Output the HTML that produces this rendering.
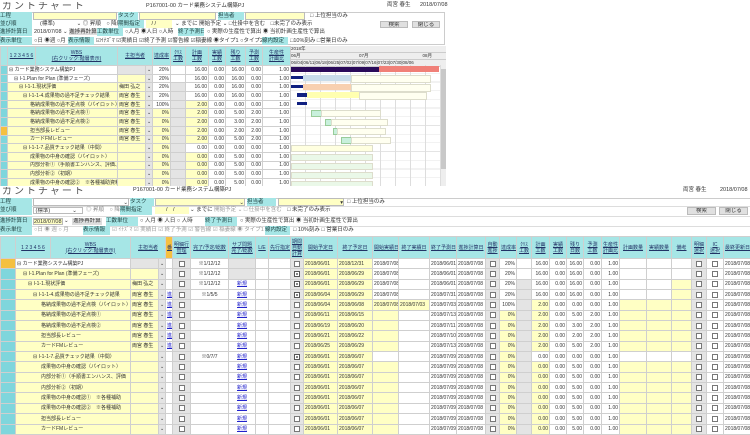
<!DOCTYPE html>
<html><head><meta charset="utf-8">
<style>
body{margin:0;width:750px;height:434px;overflow:hidden;background:#fff;font-family:"Liberation Sans","Noto Sans CJK JP",sans-serif;font-size:5.5px;color:#333;position:relative}
.a{position:absolute;white-space:nowrap;overflow:hidden;line-height:8px}
.l{background:#a6e6e6;color:#244}
.yy{background:#ffffc4}
.in{border:1px solid #bbb;box-sizing:border-box}
table{border-collapse:collapse;table-layout:fixed;position:absolute}
td{border:1px solid #cfcfcf;padding:0 1px;white-space:nowrap;overflow:hidden;font-size:5px;line-height:6px}
td.h{background:#a6e6e6;color:#236;text-align:center;text-decoration:underline}
td.y{background:#ffffc4}
td.g{background:#e4e4e4}
td.c{background:#7fd6dc}
td.o{background:#f5c040}
td.r{text-align:right}
td.m{text-align:center}
i.c{display:inline-block;width:4px;height:4px;border:1px solid #777;background:#fff;vertical-align:middle;font-style:normal}
i.k{background:#fff;border-color:#555;box-shadow:inset 0 0 0 1px #fff,inset 0 0 0 3px #888}
a{color:#22c;text-decoration:underline}
.t{font-size:10px;color:#555;letter-spacing:2px;line-height:10px}
.btn{background:#e0e0e0;border:1px solid #bbb;box-sizing:border-box;text-align:center}
</style></head><body>

<!-- ===== TOP PANEL ===== -->
<div class="a t" style="left:2px;top:2px">ガントチャート</div>
<div class="a" style="left:146px;top:2px">P167001-00 カード業務システム構築PJ</div>
<div class="a" style="left:387px;top:1px">両宮 春生</div>
<div class="a" style="left:420px;top:1px">2018/07/08</div>
<div class="a" style="left:0;top:12px;width:445px;height:33px;border:1px solid #ccc;box-sizing:border-box"></div>
<div class="a l" style="left:0;top:12px;width:32px;height:8px">工程</div>
<div class="a yy in" style="left:33px;top:12px;width:84px;height:8px"></div>
<div class="a l" style="left:118px;top:12px;width:20px;height:8px">タスク</div>
<div class="a yy in" style="left:139px;top:12px;width:77px;height:8px"></div>
<div class="a l" style="left:218px;top:12px;width:26px;height:8px">担当者</div>
<div class="a yy in" style="left:245px;top:12px;width:60px;height:8px"></div>
<div class="a" style="left:310px;top:12px">□ 上位担当のみ</div>
<div class="a l" style="left:0;top:20px;width:32px;height:8px">並び順</div>
<div class="a" style="left:40px;top:20px">(標準)　　　　⌄ ◎ 昇順　○ 降順</div>
<div class="a l" style="left:118px;top:20px;width:26px;height:8px">期間指定</div>
<div class="a yy" style="left:146px;top:20px;width:26px;height:8px">　/ /</div>
<div class="a" style="left:175px;top:20px">⌄ までに 開始予定 ⌄ □仕掛中を含む　□未完了のみ表示</div>
<div class="a btn" style="left:380px;top:21px;width:28px;height:7px;line-height:6px">検索</div>
<div class="a btn" style="left:412px;top:21px;width:28px;height:7px;line-height:6px">閉じる</div>
<div class="a l" style="left:0;top:28px;width:32px;height:8px">進捗計算日</div>
<div class="a" style="left:34px;top:28px">2018/07/08 ⌄ <span style="background:#ddd">進捗再計算</span></div>
<div class="a l" style="left:97px;top:28px;width:26px;height:8px">工数単位</div>
<div class="a" style="left:125px;top:28px">○人月 ◉人日 ○人時</div>
<div class="a l" style="left:178px;top:28px;width:26px;height:8px">終了予測日</div>
<div class="a" style="left:207px;top:28px">○ 実際の生産性で算出 ◉ 当初計画生産性で算出</div>
<div class="a l" style="left:0;top:37px;width:32px;height:8px">表示単位</div>
<div class="a" style="left:34px;top:37px">○日 ◉週 ○月</div>
<div class="a l" style="left:68px;top:37px;width:26px;height:8px">表示情報</div>
<div class="a" style="left:96px;top:37px">☑ｲﾅｽﾞﾏ ☑実績日 ☑終了予測 ☑警告線 ☑稲妻線 ◉タイプ1 ○タイプ2</div>
<div class="a l" style="left:262px;top:37px;width:26px;height:8px">線内設定</div>
<div class="a" style="left:290px;top:37px">□10%刻み □営業日のみ</div>

<table style="left:0;top:46px;width:290px">
<colgroup><col style="width:7px"><col style="width:28px"><col style="width:82px"><col style="width:28px"><col style="width:7px"><col style="width:18px"><col style="width:15px"><col style="width:23px"><col style="width:17px"><col style="width:20px"><col style="width:17px"><col style="width:28px"></colgroup>
<tr style="height:19px"><td class="h"></td><td class="h">1 2 3 4 5 6</td><td class="h">WBS<br>(右クリック:階層表示)</td><td class="h" colspan="2">主担当者</td><td class="h">達成率</td><td class="h">ｸﾘｽ<br>工数</td><td class="h">計画<br>工数</td><td class="h">実績<br>工数</td><td class="h">残り<br>工数</td><td class="h">予測<br>工数</td><td class="h">生産性<br>計画比</td></tr>
<tr style="height:8.7px"><td class="c"></td><td colspan="2">⊟ カード業務システム構築PJ</td><td class="g"></td><td class="g">⌄</td><td class="r">20%</td><td></td><td class="r">16.00</td><td class="r">0.00</td><td class="r">16.00</td><td class="r">0.00</td><td class="r">1.00</td></tr>
<tr style="height:8.7px"><td class="c"></td><td colspan="2" style="padding-left:6px">⊟ I-1.Plan for Plan (準備フェーズ)</td><td class="y"></td><td class="g">⌄</td><td class="r">20%</td><td></td><td class="r">16.00</td><td class="r">0.00</td><td class="r">16.00</td><td class="r">0.00</td><td class="r">1.00</td></tr>
<tr style="height:8.7px"><td class="c"></td><td colspan="2" class="y" style="padding-left:11px">⊟ I-1-1.現状評価</td><td class="y">梅田 弘之</td><td class="g">⌄</td><td class="r">20%</td><td class="g"></td><td class="r">16.00</td><td class="r">0.00</td><td class="r">16.00</td><td class="r">0.00</td><td class="r">1.00</td></tr>
<tr style="height:8.7px"><td class="c"></td><td colspan="2" class="y" style="padding-left:15px">⊟ I-1-1-4.成果物の過不足チェック結果</td><td class="y">両宮 春生</td><td class="g">⌄</td><td class="r">20%</td><td class="g"></td><td class="r">16.00</td><td class="r">0.00</td><td class="r">16.00</td><td class="r">0.00</td><td class="r">1.00</td></tr>
<tr style="height:8.7px"><td class="c"></td><td colspan="2" class="y" style="padding-left:22px">格納成果物の過不足点検（パイロット）</td><td class="y">両宮 春生</td><td class="g">⌄</td><td class="r">100%</td><td class="g"></td><td class="r y">2.00</td><td class="r">0.00</td><td class="r">0.00</td><td class="r">0.00</td><td class="r">1.00</td></tr>
<tr style="height:8.7px"><td class="c"></td><td colspan="2" class="y" style="padding-left:22px">格納成果物の過不足点検①</td><td class="y">両宮 春生</td><td class="g">⌄</td><td class="r y">0%</td><td class="g"></td><td class="r y">2.00</td><td class="r">0.00</td><td class="r">5.00</td><td class="r">2.00</td><td class="r">1.00</td></tr>
<tr style="height:8.7px"><td class="c"></td><td colspan="2" class="y" style="padding-left:22px">格納成果物の過不足点検②</td><td class="y">両宮 春生</td><td class="g">⌄</td><td class="r y">0%</td><td class="g"></td><td class="r y">2.00</td><td class="r">0.00</td><td class="r">3.00</td><td class="r">2.00</td><td class="r">1.00</td></tr>
<tr style="height:8.7px"><td class="o"></td><td colspan="2" class="y" style="padding-left:22px">担当部長レビュー</td><td class="y">両宮 春生</td><td class="g">⌄</td><td class="r y">0%</td><td class="g"></td><td class="r y">2.00</td><td class="r">0.00</td><td class="r">2.00</td><td class="r">2.00</td><td class="r">1.00</td></tr>
<tr style="height:8.7px"><td class="c"></td><td colspan="2" class="y" style="padding-left:22px">カードFMレビュー</td><td class="y">両宮 春生</td><td class="g">⌄</td><td class="r y">0%</td><td class="g"></td><td class="r y">2.00</td><td class="r">0.00</td><td class="r">5.00</td><td class="r">2.00</td><td class="r">1.00</td></tr>
<tr style="height:8.7px"><td class="c"></td><td colspan="2" class="y" style="padding-left:15px">⊟ I-1-1-7.品質チェック結果（中間）</td><td class="y"></td><td class="g">⌄</td><td class="r y">0%</td><td class="g"></td><td class="r">0.00</td><td class="r">0.00</td><td class="r">0.00</td><td class="r">0.00</td><td class="r">1.00</td></tr>
<tr style="height:8.7px"><td class="c"></td><td colspan="2" class="y" style="padding-left:22px">成果物の中身の確認（パイロット）</td><td class="y"></td><td class="g">⌄</td><td class="r y">0%</td><td class="g"></td><td class="r y">0.00</td><td class="r">0.00</td><td class="r">5.00</td><td class="r">0.00</td><td class="r">1.00</td></tr>
<tr style="height:8.7px"><td class="c"></td><td colspan="2" class="y" style="padding-left:22px">内部分析①（手順書エンハンス、評価、I</td><td class="y"></td><td class="g">⌄</td><td class="r y">0%</td><td class="g"></td><td class="r y">0.00</td><td class="r">0.00</td><td class="r">5.00</td><td class="r">0.00</td><td class="r">1.00</td></tr>
<tr style="height:8.7px"><td class="c"></td><td colspan="2" class="y" style="padding-left:22px">内部分析②（初期）</td><td class="y"></td><td class="g">⌄</td><td class="r y">0%</td><td class="g"></td><td class="r y">0.00</td><td class="r">0.00</td><td class="r">5.00</td><td class="r">0.00</td><td class="r">1.00</td></tr>
<tr style="height:8.7px"><td class="c"></td><td colspan="2" class="y" style="padding-left:22px">成果物の中身の確認②　※各種補助資料</td><td class="y"></td><td class="g">⌄</td><td class="r y">0%</td><td class="g"></td><td class="r y">0.00</td><td class="r">0.00</td><td class="r">5.00</td><td class="r">0.00</td><td class="r">1.00</td></tr>
</table>

<!-- gantt -->
<div class="a" style="left:290px;top:46px;width:155px;height:140px;border-left:1px solid #ccc;background:#fff;font-size:4.5px;line-height:6px">
 <div style="height:6px;background:#eee;border-bottom:1px solid #ccc">2018年</div>
 <div style="height:6px;background:#eee;border-bottom:1px solid #ccc">06月　　　　　　　　　　　　　07月　　　　　　　　　　　　08月</div>
 <div style="height:6px;background:#eee;border-bottom:1px solid #ccc">06/04|06/11|06/18|06/25|07/02|07/09|07/16|07/23|07/30|08/06</div>
 <div style="position:absolute;left:0;top:19px;width:150px;height:121px;background:repeating-linear-gradient(90deg,transparent 0 14px,#ddd 14px 15px),repeating-linear-gradient(0deg,transparent 0 8px,#e4e4e4 8px 8.7px)"></div>
 <div style="position:absolute;left:0;top:21px;width:88px;height:5px;background:#2a0a5a"></div>
 <div style="position:absolute;left:88px;top:20px;width:60px;height:6px;background:#f08078"></div>
 <div style="position:absolute;left:0;top:30px;width:12px;height:3px;background:#102080"></div>
 <div style="position:absolute;left:12px;top:29px;width:48px;height:6px;background:#c8dcea"></div>
 <div style="position:absolute;left:60px;top:29px;width:78px;height:6px;border:1px solid #ddc;background:#fffff0"></div>
 <div style="position:absolute;left:0;top:39px;width:12px;height:3px;background:#102080"></div>
 <div style="position:absolute;left:12px;top:38px;width:48px;height:6px;background:#f8d0b0"></div>
 <div style="position:absolute;left:60px;top:38px;width:78px;height:6px;border:1px solid #ddc;background:#fffff0"></div>
 <div style="position:absolute;left:6px;top:47px;width:10px;height:4px;background:#102080"></div>
 <div style="position:absolute;left:16px;top:46px;width:52px;height:6px;background:#ffffb0"></div>
 <div style="position:absolute;left:68px;top:46px;width:66px;height:6px;border:1px solid #ddc;background:#fffff0"></div>
 <div style="position:absolute;left:6px;top:56px;width:10px;height:3px;background:#102080"></div>
 <div style="position:absolute;left:20px;top:64px;width:10px;height:5px;background:#c8f0dc;border:1px solid #9c9"></div>
 <div style="position:absolute;left:30px;top:64px;width:58px;height:5px;border:1px solid #ddc;background:#fffff0"></div>
 <div style="position:absolute;left:34px;top:73px;width:6px;height:5px;background:#c8f0dc;border:1px solid #9c9"></div>
 <div style="position:absolute;left:40px;top:73px;width:55px;height:5px;border:1px solid #ddc;background:#fffff0"></div>
 <div style="position:absolute;left:42px;top:82px;width:4px;height:5px;background:#c8f0dc;border:1px solid #9c9"></div>
 <div style="position:absolute;left:46px;top:82px;width:47px;height:5px;border:1px solid #ddc;background:#fffff0"></div>
 <div style="position:absolute;left:50px;top:91px;width:10px;height:5px;background:#c8f0dc;border:1px solid #9c9"></div>
 <div style="position:absolute;left:60px;top:91px;width:38px;height:5px;border:1px solid #ddc;background:#fffff0"></div>
 <div style="position:absolute;left:0;top:99px;width:80px;height:5px;border:1px solid #ddc;background:#ffffe0"></div>
 <div style="position:absolute;left:0;top:108px;width:80px;height:5px;border:1px solid #ddc;background:#eaf8e8"></div>
 <div style="position:absolute;left:0;top:117px;width:80px;height:5px;border:1px solid #ddc;background:#eaf8e8"></div>
 <div style="position:absolute;left:0;top:126px;width:80px;height:5px;border:1px solid #ddc;background:#eaf8e8"></div>
 <div style="position:absolute;left:0;top:135px;width:80px;height:5px;border:1px solid #ddc;background:#eaf8e8"></div>
 <div style="position:absolute;left:150px;top:19px;width:5px;height:121px;background:#eee"><div style="margin-top:4px;height:100px;background:#c8c8c8"></div></div>
</div>

<!-- ===== BOTTOM PANEL ===== -->
<div class="a" style="left:0;top:186px;width:750px;height:248px;background:#fff"></div>
<div class="a t" style="left:2px;top:187px">ガントチャート</div>
<div class="a" style="left:133px;top:186px">P167001-00 カード業務システム構築PJ</div>
<div class="a" style="left:683px;top:186px">両宮 春生</div>
<div class="a" style="left:720px;top:186px">2018/07/08</div>
<div class="a" style="left:0;top:198px;width:750px;height:37px;border-top:1px solid #ccc"></div>
<div class="a" style="left:0;top:206px;width:750px;border-top:1px solid #ddd"></div>
<div class="a" style="left:0;top:216px;width:750px;border-top:1px solid #ddd"></div>
<div class="a" style="left:0;top:226px;width:750px;border-top:1px solid #ddd"></div>
<div class="a l" style="left:0;top:198px;width:32px;height:8px">工程</div>
<div class="a in" style="left:33px;top:198px;width:96px;height:8px;text-align:right">⌄</div>
<div class="a l" style="left:130px;top:198px;width:24px;height:8px">タスク</div>
<div class="a yy in" style="left:155px;top:198px;width:90px;height:8px;text-align:right">⌄</div>
<div class="a l" style="left:247px;top:198px;width:29px;height:8px">担当者</div>
<div class="a yy in" style="left:278px;top:198px;width:66px;height:8px;text-align:right">▾</div>
<div class="a" style="left:347px;top:198px">□ 上位担当のみ</div>
<div class="a l" style="left:0;top:206px;width:32px;height:9px">並び順</div>
<div class="a in" style="left:33px;top:207px;width:50px;height:7px;line-height:6px">&nbsp;(標準)　　　　⌄</div>
<div class="a" style="left:86px;top:206px;color:#888">◎ 昇順　○ 降順</div>
<div class="a l" style="left:120px;top:206px;width:32px;height:9px">期間指定</div>
<div class="a yy" style="left:155px;top:207px;width:34px;height:7px;line-height:6px">　　/　/</div>
<div class="a" style="left:190px;top:206px">⌄ までに <span style="color:#999">開始予定 ⌄</span> <span style="color:#999">□ 仕掛中を含む</span>　□ 未完了のみ表示</div>
<div class="a btn" style="left:687px;top:207px;width:29px;height:8px;line-height:7px">検索</div>
<div class="a btn" style="left:719px;top:207px;width:29px;height:8px;line-height:7px">閉じる</div>
<div class="a l" style="left:0;top:217px;width:32px;height:9px">進捗計算日</div>
<div class="a yy in" style="left:33px;top:218px;width:30px;height:7px;line-height:6px">2018/07/08</div>
<div class="a" style="left:64px;top:217px">⌄</div>
<div class="a" style="left:72px;top:218px;width:30px;height:7px;line-height:6px;background:#ddd;text-align:center">進捗再計算</div>
<div class="a l" style="left:106px;top:217px;width:32px;height:9px">工数単位</div>
<div class="a" style="left:140px;top:217px">○ 人月 ◉ 人日 ○ 人時</div>
<div class="a l" style="left:205px;top:217px;width:32px;height:9px">終了予測日</div>
<div class="a" style="left:240px;top:217px">○ 実際の生産性で算出 ◉ 当初計画生産性で算出</div>
<div class="a l" style="left:0;top:226px;width:32px;height:9px">表示単位</div>
<div class="a" style="left:34px;top:226px;color:#999">○日 ◉ 週 ○ 月</div>
<div class="a l" style="left:83px;top:226px;width:27px;height:9px">表示情報</div>
<div class="a" style="left:112px;top:226px;color:#999">☑ ｲﾅｽﾞﾏ ☑ 実績日 ☑ 終了予測 ☑ 警告線 ☑ 稲妻線 ◉ タイプ1 ○ タイプ2</div>
<div class="a l" style="left:265px;top:226px;width:25px;height:9px">線内設定</div>
<div class="a" style="left:293px;top:226px">□ 10%刻み □ 営業日のみ</div>

<table style="left:0;top:236px;width:750px">
<colgroup><col style="width:15px"><col style="width:35px"><col style="width:80px"><col style="width:28px"><col style="width:7px"><col style="width:7px"><col style="width:18px"><col style="width:38px"><col style="width:27px"><col style="width:13px"><col style="width:22px"><col style="width:13px"><col style="width:34px"><col style="width:35px"><col style="width:26px"><col style="width:31px"><col style="width:27px"><col style="width:29px"><col style="width:14px"><col style="width:17px"><col style="width:15px"><col style="width:18px"><col style="width:17px"><col style="width:17px"><col style="width:18px"><col style="width:18px"><col style="width:27px"><col style="width:25px"><col style="width:20px"><col style="width:15px"><col style="width:17px"><col style="width:27px"></colgroup>
<tr style="height:22px"><td class="h"></td><td class="h">1 2 3 4 5 6</td><td class="h">WBS<br>(右クリック:階層表示)</td><td class="h" colspan="2">主担当者</td><td class="h" style="background:#f5c040">番</td><td class="h">明細行<br>管理</td><td class="h">完了/予定/総数</td><td class="h">サブ問題<br>完了/総数</td><td class="h">L/E</td><td class="h">先行指定</td><td class="h">期間<br>自動<br>計算</td><td class="h">開始予定日</td><td class="h">終了予定日</td><td class="h">開始実績日</td><td class="h">終了実績日</td><td class="h">終了予測日</td><td class="h">進捗計算日</td><td class="h">自動<br>進捗</td><td class="h">達成率</td><td class="h">ｸﾘｽ<br>工数</td><td class="h">計画<br>工数</td><td class="h">実績<br>工数</td><td class="h">残り<br>日数</td><td class="h">予測<br>工数</td><td class="h">生産性<br>計画比</td><td class="h">計画数量</td><td class="h">実績数量</td><td class="h">備考</td><td class="h">明細<br>選択</td><td class="h">IC<br>選択</td><td class="h">最終更新日</td></tr>

<tr style="height:10.35px"><td class="o"></td><td colspan="2">⊟ カード業務システム構築PJ</td><td class="g"></td><td class="g">⌄</td><td></td><td class="g m"><i class="c"></i></td><td class="m">※1/12/12</td><td class="g"></td><td></td><td></td><td class="g m"><i class="c"></i></td><td class="y">2018/06/01</td><td class="y">2018/12/31</td><td>2018/07/08</td><td></td><td>2018/06/01</td><td>2018/07/08</td><td class="g m"><i class="c"></i></td><td class="r">20%</td><td></td><td class="r">16.00</td><td class="r">0.00</td><td class="r">16.00</td><td class="r">0.00</td><td class="r">1.00</td><td></td><td></td><td></td><td class="g m"><i class="c"></i></td><td class="m"><i class="c"></i></td><td>2018/07/08</td></tr>
<tr style="height:10.35px"><td class="c"></td><td colspan="2" class="y" style="padding-left:7px">⊟ I-1.Plan for Plan (準備フェーズ)</td><td class="y"></td><td class="g">⌄</td><td></td><td class="g m"><i class="c"></i></td><td class="m">※1/12/12</td><td class="g"></td><td></td><td></td><td class="g m"><i class="c k"></i></td><td class="y">2018/06/01</td><td class="y">2018/06/29</td><td>2018/07/08</td><td></td><td>2018/06/01</td><td>2018/07/08</td><td class="g m"><i class="c"></i></td><td class="r">20%</td><td></td><td class="r">16.00</td><td class="r">0.00</td><td class="r">16.00</td><td class="r">0.00</td><td class="r">1.00</td><td></td><td></td><td></td><td class="g m"><i class="c"></i></td><td class="m"><i class="c"></i></td><td>2018/07/08</td></tr>
<tr style="height:10.35px"><td class="c"></td><td colspan="2" class="y" style="padding-left:12px">⊟ I-1-1.現状評価</td><td class="y">梅田 弘之</td><td class="g">⌄</td><td></td><td class="g m"><i class="c"></i></td><td class="m">※1/12/12</td><td class="m"><a>新規</a></td><td></td><td></td><td class="g m"><i class="c k"></i></td><td class="y">2018/06/01</td><td class="y">2018/06/29</td><td>2018/07/08</td><td></td><td>2018/06/01</td><td>2018/07/08</td><td class="g m"><i class="c"></i></td><td class="r">20%</td><td class="g"></td><td class="r">16.00</td><td class="r">0.00</td><td class="r">16.00</td><td class="r">0.00</td><td class="r">1.00</td><td></td><td></td><td class="y"></td><td class="g m"><i class="c"></i></td><td class="m"><i class="c"></i></td><td>2018/07/08</td></tr>
<tr style="height:10.35px"><td class="c"></td><td colspan="2" class="y" style="padding-left:17px">⊟ I-1-1-4.成果物の過不足チェック結果</td><td class="y">両宮 春生</td><td class="g">⌄</td><td><a>進捗</a></td><td class="g m"><i class="c"></i></td><td class="m">※1/5/5</td><td class="m"><a>新規</a></td><td></td><td></td><td class="g m"><i class="c k"></i></td><td class="y">2018/06/04</td><td class="y">2018/06/29</td><td>2018/07/08</td><td></td><td>2018/07/31</td><td>2018/07/08</td><td class="g m"><i class="c"></i></td><td class="r">20%</td><td class="g"></td><td class="r">16.00</td><td class="r">0.00</td><td class="r">16.00</td><td class="r">0.00</td><td class="r">1.00</td><td></td><td></td><td class="y"></td><td class="g m"><i class="c"></i></td><td class="m"><i class="c"></i></td><td>2018/07/08</td></tr>
<tr style="height:10.35px"><td class="c"></td><td colspan="2" class="y" style="padding-left:25px">格納成果物の過不足点検（パイロット）</td><td class="y">両宮 春生</td><td class="g">⌄</td><td><a>進捗</a></td><td class="g m"><i class="c"></i></td><td></td><td class="m"><a>新規</a></td><td></td><td></td><td class="g m"><i class="c"></i></td><td class="y">2018/06/04</td><td class="y">2018/06/08</td><td class="y">2018/07/08</td><td class="y">2018/07/03</td><td>2018/07/03</td><td>2018/07/08</td><td class="g m"><i class="c"></i></td><td class="r">100%</td><td class="g"></td><td class="r y">2.00</td><td class="r">0.00</td><td class="r">0.00</td><td class="r">0.00</td><td class="r">1.00</td><td class="y"></td><td class="y"></td><td class="y"></td><td class="g m"><i class="c"></i></td><td class="m"><i class="c"></i></td><td>2018/07/08</td></tr>
<tr style="height:10.35px"><td class="c"></td><td colspan="2" class="y" style="padding-left:25px">格納成果物の過不足点検①</td><td class="y">両宮 春生</td><td class="g">⌄</td><td><a>進捗</a></td><td class="g m"><i class="c"></i></td><td></td><td class="m"><a>新規</a></td><td></td><td></td><td class="g m"><i class="c"></i></td><td class="y">2018/06/11</td><td class="y">2018/06/15</td><td class="y"></td><td></td><td>2018/07/13</td><td>2018/07/08</td><td class="g m"><i class="c"></i></td><td class="r y">0%</td><td class="g"></td><td class="r y">2.00</td><td class="r">0.00</td><td class="r">5.00</td><td class="r">2.00</td><td class="r">1.00</td><td class="y"></td><td class="y"></td><td class="y"></td><td class="g m"><i class="c"></i></td><td class="m"><i class="c"></i></td><td>2018/07/08</td></tr>
<tr style="height:10.35px"><td class="c"></td><td colspan="2" class="y" style="padding-left:25px">格納成果物の過不足点検②</td><td class="y">両宮 春生</td><td class="g">⌄</td><td><a>進捗</a></td><td class="g m"><i class="c"></i></td><td></td><td class="m"><a>新規</a></td><td></td><td></td><td class="g m"><i class="c"></i></td><td class="y">2018/06/19</td><td class="y">2018/06/20</td><td class="y"></td><td></td><td>2018/07/11</td><td>2018/07/08</td><td class="g m"><i class="c"></i></td><td class="r y">0%</td><td class="g"></td><td class="r y">2.00</td><td class="r">0.00</td><td class="r">3.00</td><td class="r">2.00</td><td class="r">1.00</td><td class="y"></td><td class="y"></td><td class="y"></td><td class="g m"><i class="c"></i></td><td class="m"><i class="c"></i></td><td>2018/07/08</td></tr>
<tr style="height:10.35px"><td class="c"></td><td colspan="2" class="y" style="padding-left:25px">担当部長レビュー</td><td class="y">両宮 春生</td><td class="g">⌄</td><td><a>進捗</a></td><td class="g m"><i class="c"></i></td><td></td><td class="m"><a>新規</a></td><td></td><td></td><td class="g m"><i class="c"></i></td><td class="y">2018/06/21</td><td class="y">2018/06/22</td><td class="y"></td><td></td><td>2018/07/10</td><td>2018/07/08</td><td class="g m"><i class="c"></i></td><td class="r y">0%</td><td class="g"></td><td class="r y">2.00</td><td class="r">0.00</td><td class="r">2.00</td><td class="r">2.00</td><td class="r">1.00</td><td class="y"></td><td class="y"></td><td class="y"></td><td class="g m"><i class="c"></i></td><td class="m"><i class="c"></i></td><td>2018/07/08</td></tr>
<tr style="height:10.35px"><td class="c"></td><td colspan="2" class="y" style="padding-left:25px">カードFMレビュー</td><td class="y">両宮 春生</td><td class="g">⌄</td><td><a>進捗</a></td><td class="g m"><i class="c"></i></td><td></td><td class="m"><a>新規</a></td><td></td><td></td><td class="g m"><i class="c"></i></td><td class="y">2018/06/25</td><td class="y">2018/06/29</td><td class="y"></td><td></td><td>2018/07/13</td><td>2018/07/08</td><td class="g m"><i class="c"></i></td><td class="r y">0%</td><td class="g"></td><td class="r y">2.00</td><td class="r">0.00</td><td class="r">5.00</td><td class="r">2.00</td><td class="r">1.00</td><td class="y"></td><td class="y"></td><td class="y"></td><td class="g m"><i class="c"></i></td><td class="m"><i class="c"></i></td><td>2018/07/08</td></tr>
<tr style="height:10.35px"><td class="c"></td><td colspan="2" class="y" style="padding-left:17px">⊟ I-1-1-7.品質チェック結果（中間）</td><td class="y"></td><td class="g">⌄</td><td></td><td class="g m"><i class="c"></i></td><td class="m">※0/7/7</td><td class="m"><a>新規</a></td><td></td><td></td><td class="g m"><i class="c k"></i></td><td class="y">2018/06/01</td><td class="y">2018/06/07</td><td></td><td></td><td>2018/07/09</td><td>2018/07/08</td><td class="g m"><i class="c"></i></td><td class="r y">0%</td><td class="g"></td><td class="r">0.00</td><td class="r">0.00</td><td class="r">0.00</td><td class="r">0.00</td><td class="r">1.00</td><td></td><td></td><td></td><td class="g m"><i class="c"></i></td><td class="m"><i class="c"></i></td><td>2018/07/08</td></tr>
<tr style="height:10.35px"><td class="c"></td><td colspan="2" class="y" style="padding-left:25px">成果物の中身の確認（パイロット）</td><td class="y"></td><td class="g">⌄</td><td></td><td class="g m"><i class="c"></i></td><td></td><td class="m"><a>新規</a></td><td></td><td></td><td class="g m"><i class="c"></i></td><td class="y">2018/06/01</td><td class="y">2018/06/07</td><td class="y"></td><td></td><td>2018/07/09</td><td>2018/07/08</td><td class="g m"><i class="c"></i></td><td class="r y">0%</td><td class="g"></td><td class="r y">0.00</td><td class="r">0.00</td><td class="r">5.00</td><td class="r">0.00</td><td class="r">1.00</td><td class="y"></td><td class="y"></td><td class="y"></td><td class="g m"><i class="c"></i></td><td class="m"><i class="c"></i></td><td>2018/07/08</td></tr>
<tr style="height:10.35px"><td class="c"></td><td colspan="2" class="y" style="padding-left:25px">内部分析①（手順書エンハンス、評価</td><td class="y"></td><td class="g">⌄</td><td></td><td class="g m"><i class="c"></i></td><td></td><td class="m"><a>新規</a></td><td></td><td></td><td class="g m"><i class="c"></i></td><td class="y">2018/06/01</td><td class="y">2018/06/07</td><td class="y"></td><td></td><td>2018/07/09</td><td>2018/07/08</td><td class="g m"><i class="c"></i></td><td class="r y">0%</td><td class="g"></td><td class="r y">0.00</td><td class="r">0.00</td><td class="r">5.00</td><td class="r">0.00</td><td class="r">1.00</td><td class="y"></td><td class="y"></td><td class="y"></td><td class="g m"><i class="c"></i></td><td class="m"><i class="c"></i></td><td>2018/07/08</td></tr>
<tr style="height:10.35px"><td class="c"></td><td colspan="2" class="y" style="padding-left:25px">内部分析②（初期）</td><td class="y"></td><td class="g">⌄</td><td></td><td class="g m"><i class="c"></i></td><td></td><td class="m"><a>新規</a></td><td></td><td></td><td class="g m"><i class="c"></i></td><td class="y">2018/06/01</td><td class="y">2018/06/07</td><td class="y"></td><td></td><td>2018/07/09</td><td>2018/07/08</td><td class="g m"><i class="c"></i></td><td class="r y">0%</td><td class="g"></td><td class="r y">0.00</td><td class="r">0.00</td><td class="r">5.00</td><td class="r">0.00</td><td class="r">1.00</td><td class="y"></td><td class="y"></td><td class="y"></td><td class="g m"><i class="c"></i></td><td class="m"><i class="c"></i></td><td>2018/07/08</td></tr>
<tr style="height:10.35px"><td class="c"></td><td colspan="2" class="y" style="padding-left:25px">成果物の中身の確認①　※各種補助</td><td class="y"></td><td class="g">⌄</td><td></td><td class="g m"><i class="c"></i></td><td></td><td class="m"><a>新規</a></td><td></td><td></td><td class="g m"><i class="c"></i></td><td class="y">2018/06/01</td><td class="y">2018/06/07</td><td class="y"></td><td></td><td>2018/07/09</td><td>2018/07/08</td><td class="g m"><i class="c"></i></td><td class="r y">0%</td><td class="g"></td><td class="r y">0.00</td><td class="r">0.00</td><td class="r">5.00</td><td class="r">0.00</td><td class="r">1.00</td><td class="y"></td><td class="y"></td><td class="y"></td><td class="g m"><i class="c"></i></td><td class="m"><i class="c"></i></td><td>2018/07/08</td></tr>
<tr style="height:10.35px"><td class="c"></td><td colspan="2" class="y" style="padding-left:25px">成果物の中身の確認②　※各種補助</td><td class="y"></td><td class="g">⌄</td><td></td><td class="g m"><i class="c"></i></td><td></td><td class="m"><a>新規</a></td><td></td><td></td><td class="g m"><i class="c"></i></td><td class="y">2018/06/01</td><td class="y">2018/06/07</td><td class="y"></td><td></td><td>2018/07/09</td><td>2018/07/08</td><td class="g m"><i class="c"></i></td><td class="r y">0%</td><td class="g"></td><td class="r y">0.00</td><td class="r">0.00</td><td class="r">5.00</td><td class="r">0.00</td><td class="r">1.00</td><td class="y"></td><td class="y"></td><td class="y"></td><td class="g m"><i class="c"></i></td><td class="m"><i class="c"></i></td><td>2018/07/08</td></tr>
<tr style="height:10.35px"><td class="c"></td><td colspan="2" class="y" style="padding-left:25px">担当部長レビュー</td><td class="y"></td><td class="g">⌄</td><td></td><td class="g m"><i class="c"></i></td><td></td><td class="m"><a>新規</a></td><td></td><td></td><td class="g m"><i class="c"></i></td><td class="y">2018/06/01</td><td class="y">2018/06/07</td><td class="y"></td><td></td><td>2018/07/09</td><td>2018/07/08</td><td class="g m"><i class="c"></i></td><td class="r y">0%</td><td class="g"></td><td class="r y">0.00</td><td class="r">0.00</td><td class="r">5.00</td><td class="r">0.00</td><td class="r">1.00</td><td class="y"></td><td class="y"></td><td class="y"></td><td class="g m"><i class="c"></i></td><td class="m"><i class="c"></i></td><td>2018/07/08</td></tr>
<tr style="height:10.35px"><td class="c"></td><td colspan="2" class="y" style="padding-left:25px">カードFMレビュー</td><td class="y"></td><td class="g">⌄</td><td></td><td class="g m"><i class="c"></i></td><td></td><td class="m"><a>新規</a></td><td></td><td></td><td class="g m"><i class="c"></i></td><td class="y">2018/06/01</td><td class="y">2018/06/07</td><td class="y"></td><td></td><td>2018/07/09</td><td>2018/07/08</td><td class="g m"><i class="c"></i></td><td class="r y">0%</td><td class="g"></td><td class="r y">0.00</td><td class="r">0.00</td><td class="r">5.00</td><td class="r">0.00</td><td class="r">1.00</td><td class="y"></td><td class="y"></td><td class="y"></td><td class="g m"><i class="c"></i></td><td class="m"><i class="c"></i></td><td>2018/07/08</td></tr>
</table>
</body></html>
